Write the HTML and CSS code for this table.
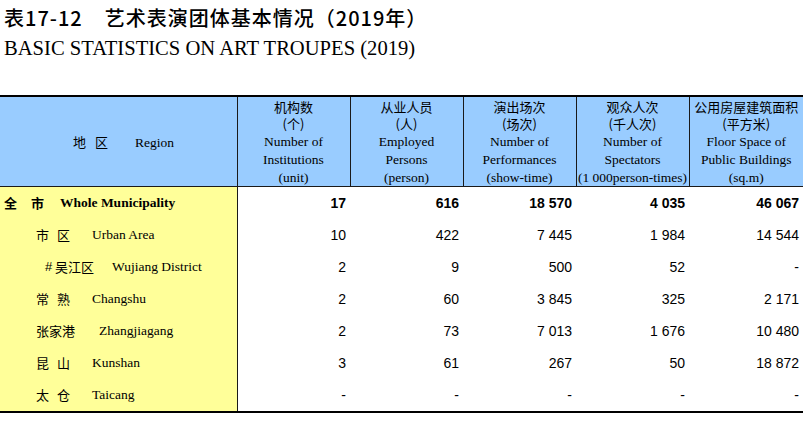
FILE: index.html
```html
<!DOCTYPE html>
<html lang="zh">
<head>
<meta charset="utf-8">
<title>艺术表演团体基本情况</title>
<link rel="stylesheet" href="styles.css">
</head>
<body>
<div class="titles">
  <h1 class="title-cn">表17-12<span class="gap"></span>艺术表演团体基本情况（2019年）</h1>
  <h2 class="title-en">BASIC STATISTICS ON ART TROUPES (2019)</h2>
</div>
<table class="stats">
  <colgroup>
    <col class="c-region"><col class="c-num"><col class="c-num"><col class="c-num"><col class="c-num"><col class="c-last">
  </colgroup>
  <thead>
    <tr>
      <th class="h-region"><span class="cn sp-head">地 区</span><span class="en h-region-en">Region</span></th>
      <th><span class="cn">机构数</span><br><span class="cn">(个)</span><br><span class="en">Number of<br>Institutions<br>(unit)</span></th>
      <th><span class="cn">从业人员</span><br><span class="cn">(人)</span><br><span class="en">Employed<br>Persons<br>(person)</span></th>
      <th><span class="cn">演出场次</span><br><span class="cn">(场次)</span><br><span class="en">Number of<br>Performances<br>(show-time)</span></th>
      <th><span class="cn">观众人次</span><br><span class="cn">(千人次)</span><br><span class="en">Number of<br>Spectators<br>(1 000person-times)</span></th>
      <th class="h-last"><span class="cn">公用房屋建筑面积</span><br><span class="cn">(平方米)</span><br><span class="en">Floor Space of<br>Public Buildings<br>(sq.m)</span></th>
    </tr>
  </thead>
  <tbody>
    <tr class="total">
      <td class="region"><div class="rg rg-total"><span class="rcn sp-wide w56">全 市</span><span class="ren">Whole Municipality</span></div></td>
      <td>17</td><td>616</td><td>18 570</td><td>4 035</td><td>46 067</td>
    </tr>
    <tr>
      <td class="region"><div class="rg rg-sub"><span class="rcn sp-mid w56">市 区</span><span class="ren">Urban Area</span></div></td>
      <td>10</td><td>422</td><td>7 445</td><td>1 984</td><td>14 544</td>
    </tr>
    <tr>
      <td class="region"><div class="rg rg-sub2"><span class="hash">#</span><span class="rcn w57">吴江区</span><span class="ren">Wujiang District</span></div></td>
      <td>2</td><td>9</td><td>500</td><td>52</td><td>-</td>
    </tr>
    <tr>
      <td class="region"><div class="rg rg-sub"><span class="rcn sp-mid w56">常 熟</span><span class="ren">Changshu</span></div></td>
      <td>2</td><td>60</td><td>3 845</td><td>325</td><td>2 171</td>
    </tr>
    <tr>
      <td class="region"><div class="rg rg-sub"><span class="rcn w63">张家港</span><span class="ren">Zhangjiagang</span></div></td>
      <td>2</td><td>73</td><td>7 013</td><td>1 676</td><td>10 480</td>
    </tr>
    <tr>
      <td class="region"><div class="rg rg-sub"><span class="rcn sp-mid w56">昆 山</span><span class="ren">Kunshan</span></div></td>
      <td>3</td><td>61</td><td>267</td><td>50</td><td>18 872</td>
    </tr>
    <tr>
      <td class="region"><div class="rg rg-sub"><span class="rcn sp-mid w56">太 仓</span><span class="ren">Taicang</span></div></td>
      <td>-</td><td>-</td><td>-</td><td>-</td><td>-</td>
    </tr>
  </tbody>
</table>
</body>
</html>
```
FILE: styles.css
```css
html, body {
  margin: 0;
  padding: 0;
  background: #ffffff;
  color: #000000;
}

.titles {
  padding: 6px 0 0 4px;
  height: 89px;
  box-sizing: border-box;
}

.title-cn {
  margin: 0;
  font-family: "Noto Sans CJK SC", "Liberation Sans", sans-serif;
  font-size: 20px;
  font-weight: 500;
  line-height: 24px;
  letter-spacing: 1px;
  white-space: nowrap;
}

.title-cn .gap {
  display: inline-block;
  width: 22px;
}

.title-en {
  margin: 5px 0 0 0;
  font-family: "Liberation Serif", serif;
  font-size: 20.6px;
  font-weight: normal;
  line-height: 26px;
  white-space: nowrap;
}

.stats {
  border-collapse: collapse;
  table-layout: fixed;
  width: 803px;
  border-top: 2px solid #000;
  border-bottom: 2px solid #000;
  margin-top: 6px;
}

.c-region { width: 237px; }
.c-num { width: 113px; }
.c-last { width: 114px; }

.stats th {
  background: #99ccff;
  height: 89px;
  padding: 0;
  border-left: 1px solid #1a1a1a;
  border-bottom: 1px solid #1a1a1a;
  text-align: center;
  vertical-align: middle;
  font-weight: normal;
  line-height: 17px;
}

.stats th.h-region {
  border-left: none;
  border-right: 1px solid #1a1a1a;
  text-align: left;
  padding-left: 73px;
  white-space: nowrap;
}

.stats .cn {
  font-family: "Noto Sans CJK SC", sans-serif;
  font-size: 13px;
  font-weight: 400;
}

.stats .en {
  font-family: "Liberation Serif", serif;
  font-size: 13.5px;
}

.sp-head {
  letter-spacing: 3px;
}

.h-region-en {
  margin-left: 24px;
}

.stats td {
  height: 32px;
  padding: 0 4px 0 0;
  text-align: right;
  vertical-align: middle;
  font-family: "Liberation Sans", Arial, sans-serif;
  font-size: 14px;
  line-height: 16px;
}

.stats td.region {
  background: #ffff99;
  text-align: left;
  padding: 0;
  border-right: 1px solid #1a1a1a;
}

.total td {
  font-weight: bold;
}

.rg {
  display: flex;
  align-items: center;
}

.rg-total { padding-left: 4px; }
.rg-sub { padding-left: 36px; }
.rg-sub2 { padding-left: 45px; }

.rcn {
  font-family: "Noto Sans CJK SC", sans-serif;
  font-size: 13px;
  white-space: nowrap;
}

.sp-wide { letter-spacing: 5.5px; }
.sp-mid { letter-spacing: 2.5px; }

.hash {
  font-family: "Liberation Sans", sans-serif;
  font-size: 13px;
  width: 10px;
}

.ren {
  font-family: "Liberation Serif", serif;
  font-size: 13.5px;
  white-space: nowrap;
}

.w56 { width: 56px; }
.w57 { width: 57px; }
.w63 { width: 63px; }
```
